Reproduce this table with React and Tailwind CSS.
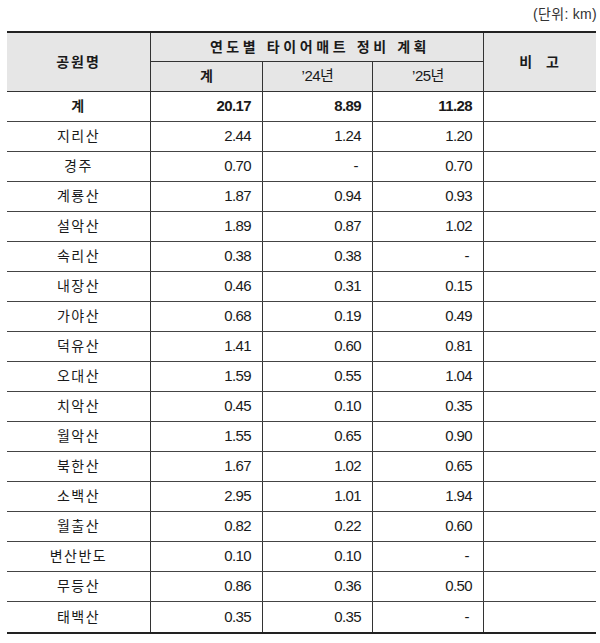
const rows = [
  ['지리산', '2.44', '1.24', '1.20'],
  ['경주', '0.70', '-', '0.70'],
  ['계룡산', '1.87', '0.94', '0.93'],
  ['설악산', '1.89', '0.87', '1.02'],
  ['속리산', '0.38', '0.38', '-'],
  ['내장산', '0.46', '0.31', '0.15'],
  ['가야산', '0.68', '0.19', '0.49'],
  ['덕유산', '1.41', '0.60', '0.81'],
  ['오대산', '1.59', '0.55', '1.04'],
  ['치악산', '0.45', '0.10', '0.35'],
  ['월악산', '1.55', '0.65', '0.90'],
  ['북한산', '1.67', '1.02', '0.65'],
  ['소백산', '2.95', '1.01', '1.94'],
  ['월출산', '0.82', '0.22', '0.60'],
  ['변산반도', '0.10', '0.10', '-'],
  ['무등산', '0.86', '0.36', '0.50'],
  ['태백산', '0.35', '0.35', '-'],
];

const cols = 'grid grid-cols-[144px_112px_110px_111px_112px]';

function Num({ value, bold }) {
  return (
    <div
      className={`flex items-center justify-end border-r border-[#333] ${
        value === '-' ? 'pr-[14px]' : 'pr-[11px]'
      } ${bold ? 'font-bold' : ''} text-[15px] tracking-[-0.6px]`}
    >
      {value}
    </div>
  );
}

function Row({ name, a, b, c, bold, last }) {
  return (
    <div className={`${cols} h-[30px] ${last ? '' : 'border-b border-[#444]'}`}>
      <div
        className={`flex items-center justify-center border-r border-[#333] text-[14px] tracking-[1.5px] ${
          bold ? 'font-bold' : ''
        }`}
      >
        {name}
      </div>
      <Num value={a} bold={bold} />
      <Num value={b} bold={bold} />
      <Num value={c} bold={bold} />
      <div />
    </div>
  );
}

export default function App() {
  return (
    <div
      className="w-[600px] h-[643px] bg-white text-[#1a1a1a]"
      style={{ fontFamily: '"Liberation Sans", "Noto Sans CJK KR", sans-serif' }}
    >
      <div className="h-[31px] flex items-center justify-end pr-[3px] pb-[2px] text-[14px] tracking-[0.3px] text-[#333]">
        (단위:&nbsp;km)
      </div>
      <div className="ml-[7px] w-[589px] border-t-2 border-b-2 border-[#222]">
        <div className={`${cols} grid-rows-[29px_29px] h-[59px] bg-[#e6e6e6] border-b border-[#333]`}>
          <div className="col-start-1 row-start-1 row-span-2 flex items-center justify-center border-r border-[#333] font-bold text-[14px] tracking-[2px]">
            공원명
          </div>
          <div className="col-start-2 col-span-3 row-start-1 flex items-center justify-center border-r border-b border-[#333] font-bold text-[14px] tracking-[3.6px] pl-[6px]">
            연도별 타이어매트 정비 계획
          </div>
          <div className="col-start-5 row-start-1 row-span-2 flex items-center justify-center font-bold text-[14px] tracking-[2px]">
            비&nbsp;&nbsp;고
          </div>
          <div className="col-start-2 row-start-2 flex items-center justify-center border-r border-[#333] font-bold text-[14px]">
            계
          </div>
          <div className="col-start-3 row-start-2 flex items-center justify-center border-r border-[#333] text-[15px] tracking-[-0.5px]">
            ’24년
          </div>
          <div className="col-start-4 row-start-2 flex items-center justify-center border-r border-[#333] text-[15px] tracking-[-0.5px]">
            ’25년
          </div>
        </div>
        <Row name="계" a="20.17" b="8.89" c="11.28" bold />
        {rows.map((r, i) => (
          <Row key={r[0]} name={r[0]} a={r[1]} b={r[2]} c={r[3]} last={i === rows.length - 1} />
        ))}
      </div>
    </div>
  );
}
